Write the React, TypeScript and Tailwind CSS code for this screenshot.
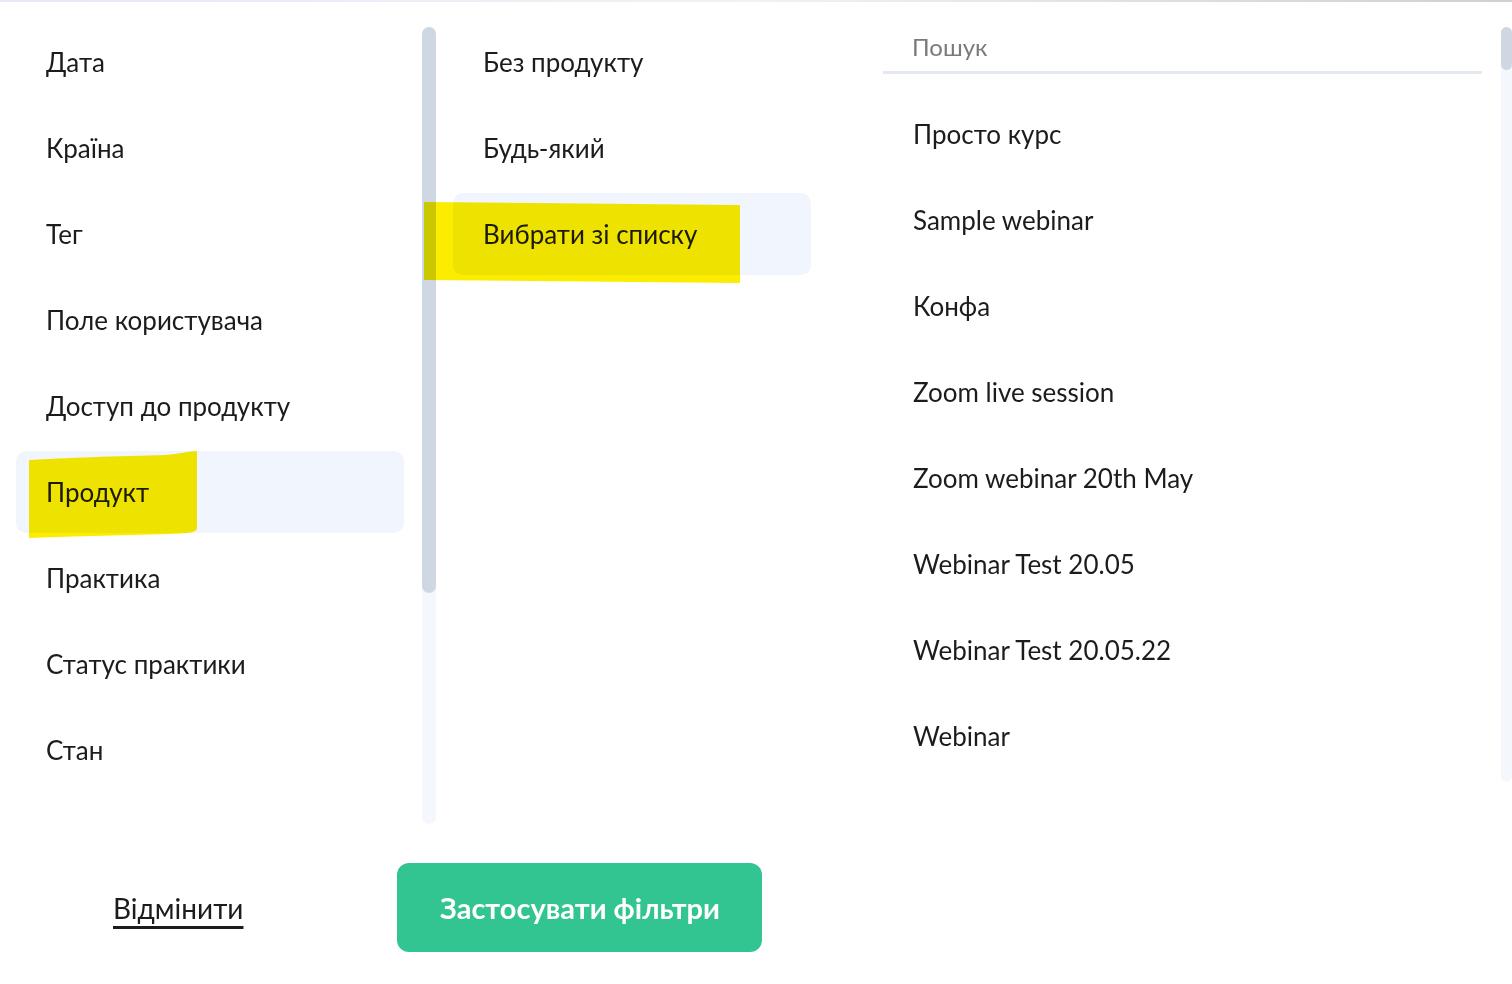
import React from "react"

const font = { fontFamily: "Lato, 'Noto Sans', sans-serif" }

const filters = [
  "Дата",
  "Країна",
  "Тег",
  "Поле користувача",
  "Доступ до продукту",
  "Продукт",
  "Практика",
  "Статус практики",
  "Стан",
]

const modes = ["Без продукту", "Будь-який", "Вибрати зі списку"]

const products = [
  "Просто курс",
  "Sample webinar",
  "Конфа",
  "Zoom live session",
  "Zoom webinar 20th May",
  "Webinar Test 20.05",
  "Webinar Test 20.05.22",
  "Webinar",
]

function Scrollbar({ track, thumb, width }: { track: string; thumb: string; width: string }) {
  return (
    <div className={`${width} ${track} mt-[25px] flex flex-col rounded-full bg-[#f4f7fb]`}>
      <div className={`${thumb} rounded-full bg-[#cfd8e2]`} />
    </div>
  )
}

export default function App() {
  return (
    <div className="relative h-[984px] w-[1512px] overflow-hidden bg-white text-[#1c1c1c]" style={font}>
      <div className="h-[2px] w-full bg-gradient-to-r from-[#e6e8f6] via-[#f2f2f5] to-[#cfcfd4]" />

      <div className="flex h-[840px]">
        {/* filter list */}
        <div className="ml-[16px] mt-[19px] flex w-[388px] flex-col gap-[4px]">
          {filters.map((f) => (
            <div
              key={f}
              className={`flex h-[82px] items-center rounded-[10px] px-[30px] text-[26px] ${
                f === "Продукт" ? "bg-[#f1f6fe]" : ""
              }`}
            >
              {f}
            </div>
          ))}
        </div>

        <div className="ml-[18px]">
          <Scrollbar width="w-[14px]" track="h-[797px]" thumb="h-[566px]" />
        </div>

        {/* mode list */}
        <div className="ml-[17px] mt-[19px] flex w-[358px] flex-col gap-[4px]">
          {modes.map((m) => (
            <div
              key={m}
              className={`flex h-[82px] items-center rounded-[10px] px-[30px] text-[26px] ${
                m === "Вибрати зі списку" ? "bg-[#f1f6fe]" : ""
              }`}
            >
              {m}
            </div>
          ))}
        </div>

        {/* product list */}
        <div className="ml-[72px] flex w-[599px] flex-col">
          <div className="flex h-[72px] items-center border-b-[3px] border-[#e3e9ef] pl-[29px] pt-[20px] text-[24px] text-[#7a7a7a]">
            Пошук
          </div>
          <div className="mt-[19px] flex flex-col gap-[4px]">
            {products.map((p) => (
              <div key={p} className="flex h-[82px] items-center pl-[30px] text-[26px]">
                {p}
              </div>
            ))}
          </div>
        </div>

        <div className="ml-[19px]">
          <Scrollbar width="w-[11px]" track="h-[755px]" thumb="h-[43px]" />
        </div>
      </div>

      {/* actions */}
      <div className="mt-[21px] flex items-center">
        <button className="ml-[113px] text-[28px] leading-none underline decoration-[3px] underline-offset-[7px]">
          Відмінити
        </button>
        <button className="ml-[154px] flex h-[89px] w-[365px] items-center justify-center rounded-[12px] bg-[#32c591] text-[29px] font-bold text-white">
          Застосувати фільтри
        </button>
      </div>

      {/* marker highlights */}
      <svg className="pointer-events-none absolute left-0 top-0 mix-blend-multiply" width="1512" height="984">
        <path
          d="M29 460 C60 458 120 456 165 455 C180 454 188 451 197 451 L197 528 C196 533 190 533 170 534 C120 535 60 537 29 538 Z"
          fill="#fcec00"
        />
        <path d="M424 202 L740 205 L740 283 L424 280 Z" fill="#fcec00" />
      </svg>
    </div>
  )
}
